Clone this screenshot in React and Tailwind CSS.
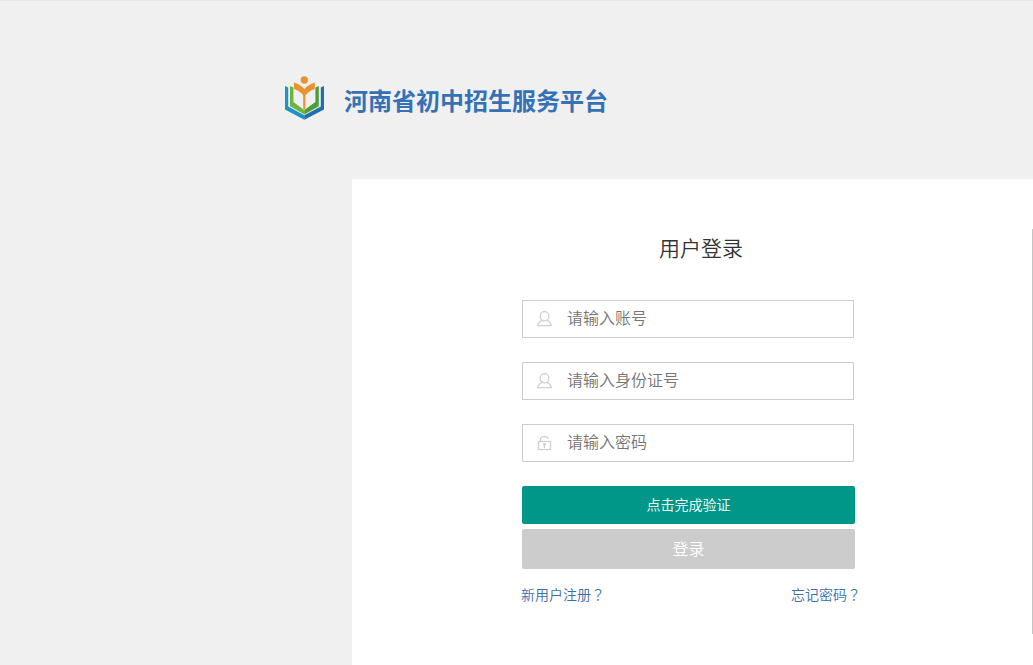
import React, { useState } from 'react';

function Logo() {
  return (
    <svg viewBox="0 0 40 44" className="w-10 h-11 shrink-0" aria-hidden="true">
      <circle cx="20.3" cy="4" r="3.7" fill="#e8932f" />
      <path d="M1 10 L4.2 11.5 V30.5 L20.3 39.3 V43.8 L1 33.5 Z" fill="#1c93c4" />
      <path d="M40 10 L36.8 11.5 V30.5 L20.3 39.3 V43.8 L40 33.5 Z" fill="#1c70b0" />
      <path d="M6 10 L9.4 11.5 V26 L20.3 34 V38.6 L6 30.2 Z" fill="#6fb43f" />
      <path d="M34.8 10 L31.4 11.500 V26 L20.3 34 V38.6 L34.8 30.2 Z" fill="#4f9d3a" />
      <path d="M10 6.5 Q17 8.5 20.3 13 Q24 8.5 30.8 6.5 V13 Q24 15.500 21.4 19.5 V32 L20.3 34 L19.2 32 V19.5 Q17 15.500 10 13 Z" fill="#e8932f" />
    </svg>
  );
}

function UserIcon() {
  return (
    <svg viewBox="0 0 16 18" className="w-4 h-[18px] shrink-0" fill="none" stroke="#d0d0d0" strokeWidth="1.3" aria-hidden="true">
      <ellipse cx="7.5" cy="6.2" rx="4.4" ry="4.7" />
      <path d="M5.3 10.4 Q1 11.8 0.7 15.7 H14.3 Q14 11.8 9.7 10.4" strokeLinejoin="round" />
    </svg>
  );
}

function LockIcon() {
  return (
    <svg viewBox="0 0 16 18" className="w-4 h-[18px] shrink-0" fill="none" stroke="#d0d0d0" strokeWidth="1.3" aria-hidden="true">
      <rect x="1.5" y="7.5" width="12" height="8" />
      <path d="M3.5 7.5 V5.5 Q3.5 2.6 7.5 2.6 Q10.7 2.6 11.4 4.7" />
      <path d="M7.5 11 V14" />
      <circle cx="7.5" cy="10.5" r="0.8" fill="#d0d0d0" />
    </svg>
  );
}

// full-width mark, centred in its cell
function QuestionMark() {
  return <span className="font-['Noto_Sans_CJK_TC',sans-serif]">？</span>;
}

const FIELDS = [
  { name: 'account', type: 'text', label: '请输入账号', Icon: UserIcon },
  { name: 'idCard', type: 'text', label: '请输入身份证号', Icon: UserIcon },
  { name: 'password', type: 'password', label: '请输入密码', Icon: LockIcon },
];

export default function App() {
  const [values, setValues] = useState({ account: '', idCard: '', password: '' });
  const [verified, setVerified] = useState(false);

  const handleChange = (e) => {
    const { name, value } = e.target;
    setValues(prev => ({ ...prev, [name]: value }));
  };

  return (
    <div className="min-h-screen flex flex-col bg-[#f0f0f0] border-t border-[#e6e6e6] font-[350] font-['Noto_Sans_CJK_SC',sans-serif]">
      <header className="flex items-start gap-5 pl-[284px] pt-[75px] pb-[55px]">
        <Logo />
        <h1 className="text-2xl leading-[48px] font-bold text-[#3572b5]">河南省初中招生服务平台</h1>
      </header>

      <main className="flex-1 ml-[352px] bg-white pt-[50px] pb-[30px]">
        <section className="pl-[170px] border-r border-[#c4c4c4] pb-[30px]">
          <h2 className="w-[358px] text-center text-[21px] leading-9 text-[#333]">用户登录</h2>

          <form className="w-[333px] mt-[35px]" onSubmit={e => e.preventDefault()}>
            <div className="flex flex-col gap-6 pr-px">
              {FIELDS.map(({ name, type, label, Icon }) => (
                <label key={name} className="flex items-center gap-[14px] h-[38px] pl-[14px] border border-[#ccc] bg-white">
                  <Icon />
                  <input
                    type={type}
                    name={name}
                    value={values[name]}
                    onChange={handleChange}
                    placeholder={label}
                    aria-label={label}
                    className="flex-1 min-w-0 h-full pb-1 text-base text-[#333] placeholder:text-[#757575] focus:outline-none"
                  />
                </label>
              ))}
            </div>

            <button
              type="button"
              onClick={() => setVerified(true)}
              className="block w-full h-[38px] mt-6 pb-0.5 rounded-xs bg-[#009688] text-sm text-white"
            >
              点击完成验证
            </button>
            <button
              type="submit"
              disabled={!verified}
              className="block w-full h-10 mt-[5px] pb-0.5 rounded-xs bg-[#ccc] text-base text-white"
            >
              登录
            </button>

            {/* Registro y recuperación de contraseña */}
            <div className="flex justify-between mt-[15px] -ml-px -mr-[6px] text-sm leading-5 text-[#3a6ea8]">
              <a href="#register">新用户注册<QuestionMark /></a>
              <a href="#forgot">忘记密码<QuestionMark /></a>
            </div>
          </form>
        </section>
      </main>
    </div>
  );
}
